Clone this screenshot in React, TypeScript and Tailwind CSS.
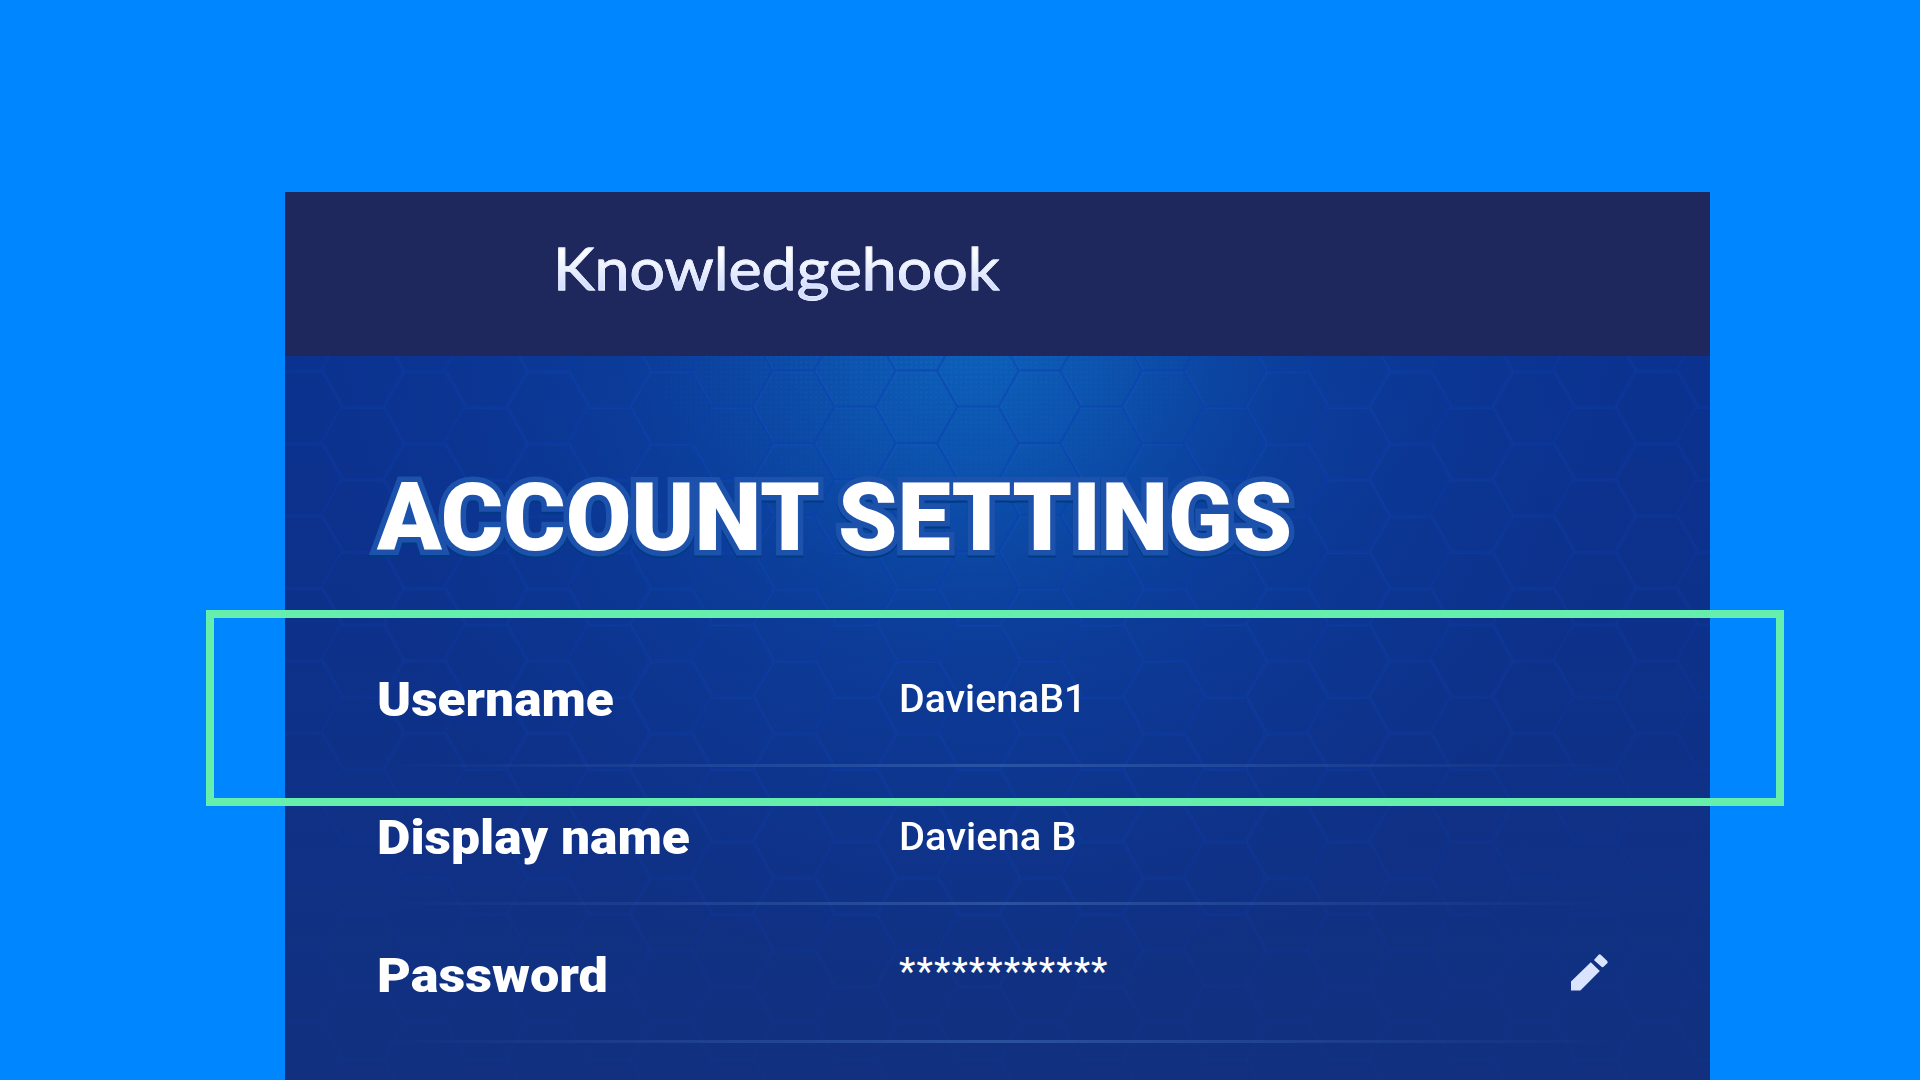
import type { ReactNode } from 'react'

interface Setting {
  label: string
  labelClass: string
  value: string
  valueClass: string
  editable?: boolean
}

const settings: Setting[] = [
  { label: 'Username', labelClass: 'scale-x-[1.072]', value: 'DavienaB1', valueClass: 'scale-x-[1.035] pt-1.5 font-medium' },
  { label: 'Display name', labelClass: 'scale-x-[1.075]', value: 'Daviena B', valueClass: 'scale-x-[1.05] pt-1.5 font-medium' },
  { label: 'Password', labelClass: 'scale-x-[1.088]', value: '************', valueClass: 'tracking-[1.1px] font-normal', editable: true },
]

function PencilIcon() {
  return (
    <svg width="37" height="37" viewBox="0 0 37 37" fill="#dbe4ff">
      <path d="M0 27.6 19.8 8.2 28.8 17 9.4 36.6H0z" />
      <path d="M23.2 5.8 27.4.9Q28.6-.4 30 .9L36 6.8Q37.3 8.2 36 9.6L32.6 12.8Q31.4 13.8 30.2 12.6L23.4 6.6Q23 6.2 23.2 5.8z" />
    </svg>
  )
}

function HexBackdrop() {
  return (
    <svg className="col-start-1 row-start-1" width="1425" height="724" viewBox="0 0 1425 724">
      <defs>
        <linearGradient id="base" x1="0" y1="0" x2="0" y2="1">
          <stop offset="0" stopColor="#0b3290" />
          <stop offset="0.4" stopColor="#0d318a" />
          <stop offset="1" stopColor="#12307f" />
        </linearGradient>
        <radialGradient id="glow" gradientUnits="userSpaceOnUse" cx="0" cy="0" r="1" gradientTransform="translate(690 -20) scale(680 660)">
          <stop offset="0" stopColor="#0b61bb" />
          <stop offset="0.2" stopColor="#0b56b1" stopOpacity="0.9" />
          <stop offset="0.5" stopColor="#0b44a3" stopOpacity="0.55" />
          <stop offset="1" stopColor="#0b3898" stopOpacity="0" />
        </radialGradient>
        <radialGradient id="fade" gradientUnits="userSpaceOnUse" cx="0" cy="0" r="1" gradientTransform="translate(690 0) scale(1000 700)">
          <stop offset="0" stopColor="#fff" />
          <stop offset="0.4" stopColor="#fff" stopOpacity="0.8" />
          <stop offset="0.8" stopColor="#fff" stopOpacity="0.5" />
          <stop offset="1" stopColor="#fff" stopOpacity="0.2" />
        </radialGradient>
        <radialGradient id="dotFade" gradientUnits="userSpaceOnUse" cx="0" cy="0" r="1" gradientTransform="translate(650 0) scale(340 180)">
          <stop offset="0" stopColor="#fff" />
          <stop offset="1" stopColor="#fff" stopOpacity="0" />
        </radialGradient>
        <pattern id="hex" x="344" y="14.5" width="123.2" height="72.4" patternUnits="userSpaceOnUse">
          <path d="M20.2 0H61.6M20.2 72.4H61.6M20.2 0 0 36.2 20.2 72.4M61.6 0 82 36.2 61.6 72.4M82 36.2H123.2" fill="none" stroke="#0a3cb2" strokeWidth="2" />
          <path d="M20.2 2H61M22 2 2 36.2 22 72.4M63.4 0 83.6 35M82 38H123.2" fill="none" stroke="#2a6fd0" strokeOpacity="0.35" strokeWidth="1" />
        </pattern>
        <pattern id="dots" width="5" height="5" patternUnits="userSpaceOnUse">
          <rect width="2.5" height="2.5" fill="#2f6fc4" />
        </pattern>
        <mask id="hexMask">
          <rect width="1425" height="724" fill="url(#fade)" />
        </mask>
        <mask id="dotMask">
          <rect width="1425" height="724" fill="url(#dotFade)" />
        </mask>
      </defs>
      <rect width="1425" height="724" fill="url(#base)" />
      <rect width="1425" height="724" fill="url(#glow)" />
      <rect width="1425" height="724" fill="url(#dots)" opacity="0.2" mask="url(#dotMask)" />
      <rect width="1425" height="724" fill="url(#hex)" opacity="0.5" mask="url(#hexMask)" />
    </svg>
  )
}

function Row({ children }: { children: ReactNode }) {
  return (
    <li>
      <div className="flex h-[135px] items-center">{children}</div>
      <div className="h-[3px] bg-linear-to-r from-transparent via-[#3d66b0]/60 to-transparent" />
    </li>
  )
}

export default function App() {
  return (
    <div className="relative h-[1080px] w-[1920px] overflow-hidden bg-[#0086ff] pt-48 pl-[285px] font-['Roboto','Liberation_Sans',sans-serif]">
      <main className="w-[1425px]">
        <header className="flex h-[164px] items-center bg-[#1f285c] pb-3 pl-[268px]">
          <span className="origin-left scale-x-[1.08] bg-linear-to-b from-white from-30% to-[#d5dfff] to-75% bg-clip-text font-['Lato',sans-serif] text-[58px] leading-[72px] text-transparent [-webkit-text-stroke:0.8px_#e9eeff]">
            Knowledgehook
          </span>
        </header>
        <div className="grid h-[724px]">
          <HexBackdrop />
          <section className="relative col-start-1 row-start-1 pr-[92px] pl-[92px]">
            <h1 className="mt-[107px] inline-block origin-left scale-x-[1.012] text-[94px] leading-[110px] font-black whitespace-nowrap text-white drop-shadow-[0_2px_0_#003a80] [-webkit-text-stroke:11px_#1c51ac] [paint-order:stroke_fill] [word-spacing:-3px]">
              ACCOUNT SETTINGS
            </h1>
            <ul className="mt-14">
              {settings.map((s) => (
                <Row key={s.label}>
                  <div className="w-[522px] pt-1.5 text-[48px] font-black text-white">
                    <span className={`inline-block origin-left ${s.labelClass}`}>{s.label}</span>
                  </div>
                  <div className="flex-1 text-[38px] text-white">
                    <span className={`inline-block origin-left ${s.valueClass}`}>{s.value}</span>
                  </div>
                  {s.editable && (
                    <button className="mr-2.5" aria-label="Edit">
                      <PencilIcon />
                    </button>
                  )}
                </Row>
              ))}
            </ul>
          </section>
        </div>
      </main>
      {/* highlight frame, wider than the panel on both sides */}
      <div className="absolute top-[610px] left-[206px] h-[196px] w-[1578px] border-8 border-[#66eeac]" />
    </div>
  )
}
